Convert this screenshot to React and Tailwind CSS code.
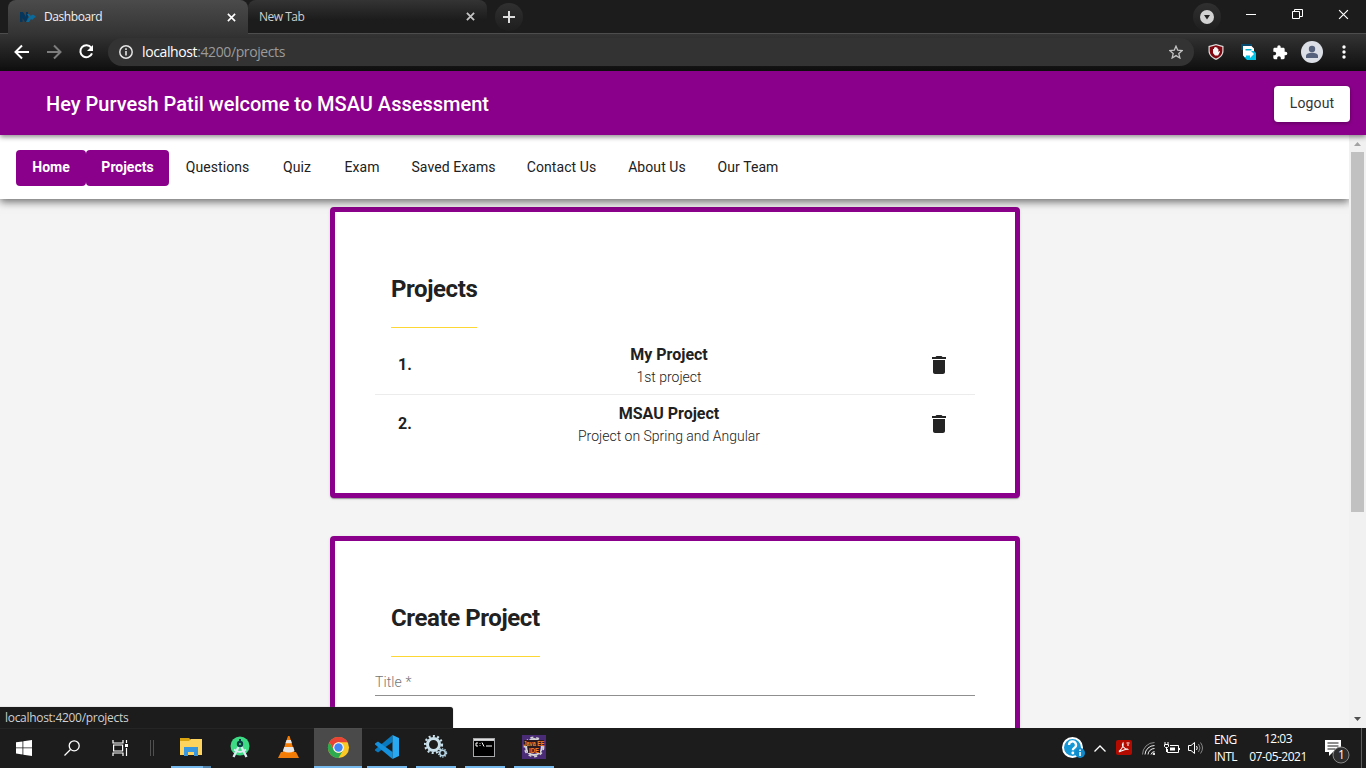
import React from "react";

const UI = "font-['Open_Sans','Noto_Sans',sans-serif]";

function Cross({ size = 9, color = "#fff", w = 1.8 }) {
  return (
    <svg width={size} height={size} viewBox="0 0 10 10" stroke={color} strokeWidth={w} fill="none">
      <path d="M1 1l8 8M9 1l-8 8" />
    </svg>
  );
}

function TabStrip() {
  return (
    <div className="flex h-[33px] shrink-0 bg-[#1c1c1c]">
      <div className="w-2 shrink-0" />
      <div className="flex h-[34px] w-[240px] shrink-0 items-center rounded-t-lg bg-linear-to-b from-[#4b4b4b] to-[#343434] pl-3 pr-3 relative z-10">
        <svg width="16" height="14" viewBox="0 0 16 14" className="shrink-0">
          <path d="M0 12V2h3l3 5V2h2v5l-2 5H5L2.500 8v4z" fill="#06365c" />
          <path d="M6 12l3-5-2-3h2l2 2c1-2 3-1 4 0l1 1-2 1c-1 2-2 2-3 1l-2 3z" fill="#0a6a9c" />
        </svg>
        <span className={`${UI} ml-2 flex-1 text-[12px] leading-4 tracking-[-0.42px] text-[#f1f1f1]`}>Dashboard</span>
        <Cross />
      </div>
      <div className="flex w-[239px] shrink-0 items-center rounded-t-lg bg-linear-to-b from-[#343434] to-[#1c1c1c] to-60% pl-[11px] pr-3">
        <span className={`${UI} flex-1 pt-px text-[12px] leading-4 tracking-[-0.5px] text-[#cfcfcf]`}>New Tab</span>
        <Cross color="#c4c4c4" w={2} />
      </div>
      <div className="ml-2 mt-[3px] flex h-7 w-7 items-center justify-center rounded-full bg-linear-to-b from-[#303030] to-[#1e1e1e]">
        <svg width="12" height="12" viewBox="0 0 12 12" stroke="#ddd" strokeWidth="2"><path d="M6 0v12M0 6h12" /></svg>
      </div>
      <div className="flex-1" />
      <div className="mt-[3px] flex h-7 w-7 items-center justify-center rounded-full bg-linear-to-b from-[#303030] to-[#1e1e1e]">
        <svg width="14" height="14" viewBox="0 0 14 14"><circle cx="7" cy="7" r="7" fill="#d2d2d2" /><path d="M4 5h6L7 9.500z" fill="#222" /></svg>
      </div>
      <div className="flex h-[28px] w-[145px] shrink-0 items-center pl-[25px] pr-[17px] justify-between">
        <svg width="10" height="10"><path d="M0 5.500h10" stroke="#fff" /></svg>
        <svg width="11" height="11" fill="none" stroke="#fff"><path d="M.5 2.500h7v7h-7zM2.500 2.500v-2h8v7h-3" /></svg>
        <Cross size={11} w={1.1} />
      </div>
    </div>
  );
}

function Toolbar() {
  return (
    <div className="flex h-[38px] shrink-0 items-center border-t border-[#4d4d4d] bg-linear-to-b from-[#343434] to-[#0f0f0f] pb-px pl-[14px]">
      <svg width="16" height="16" viewBox="0 0 16 16" fill="none" stroke="#fff" strokeWidth="2"><path d="M15 8H2M8 1.500L1.500 8 8 14.500" /></svg>
      <svg className="ml-4" width="16" height="16" viewBox="0 0 16 16" fill="none" stroke="#7d7d7d" strokeWidth="2"><path d="M1 8h13M8 1.500L14.500 8 8 14.500" /></svg>
      <svg className="ml-4" width="16" height="16" viewBox="0 0 16 16"><path d="M13.200 3.600A6 6 0 1 0 14 9.300" fill="none" stroke="#fff" strokeWidth="2" /><path d="M15 1v6H9z" fill="#fff" /></svg>
      <div className="ml-[14px] flex h-7 w-[1086px] shrink-0 items-center rounded-full bg-[#333333] pl-[11px] pr-[11px]">
        <svg width="14" height="14" viewBox="0 0 14 14"><circle cx="7" cy="7" r="6.200" fill="none" stroke="#e4e4e4" strokeWidth="1.500" /><path d="M6.200 6h1.600v4.500H6.200zM6.200 3.300h1.600v1.600H6.200z" fill="#e4e4e4" /></svg>
        <span className={`${UI} ml-[9px] flex-1 text-[14px] leading-5 tracking-[-0.39px] text-[#9b9b9b]`}>
          <span className="text-white">localhost</span>:4200/projects
        </span>
        <svg width="14" height="14" viewBox="0 0 16 16" fill="none" stroke="#c4c4c4" strokeWidth="1.500"><path d="M8 1.300l2 4.700 5.100.4-3.900 3.400 1.200 5L8 12.100l-4.400 2.700 1.200-5L.9 6.400 6 6z" /></svg>
      </div>
      <svg className="ml-[14px] shrink-0" width="16" height="16" viewBox="0 0 16 16">
        <path d="M8 0l7.500 2v5c0 4-3 7-7.500 9C3.500 14 .5 11 .5 7V2z" fill="#ddd" />
        <path d="M8 1.300l6.300 1.600V7c0 3.400-2.400 5.900-6.300 7.600C4.100 12.900 1.700 10.400 1.700 7V2.900z" fill="#800610" />
        <path d="M5 8V5h1V3.500h1.200V3h1.200v.7h1.200V5h.8v3l1-1 .7.500-2 4H7L5 9z" fill="#f5f5f5" />
      </svg>
      <svg className="ml-[17px] shrink-0" width="15" height="16" viewBox="0 0 15 16">
        <path d="M0 0h11v6H0z" fill="#074a70" />
        <path d="M6 6h6l3 3v7H6l-3-3z" fill="#00c5e8" />
        <path d="M2 2h8.500L13 4.500V7H9v2H5v4H3.500L2 11.500z" fill="#fff" />
        <path d="M5 8.500h4V6l4 4-4 4v-2.500H5z" fill="#fff" />
        <path d="M4.500 5h6v1.500h-6z" fill="#00b2d0" />
      </svg>
      <svg className="ml-4 shrink-0" width="16" height="17" viewBox="0 0 24 24" fill="#fff"><path d="M20.500 11H19V7c0-1.100-.9-2-2-2h-4V3.500a2.500 2.500 0 0 0-5 0V5H4c-1.100 0-1.990.9-1.990 2v3.800H3.500c1.490 0 2.700 1.210 2.700 2.700s-1.210 2.700-2.700 2.700H2V20c0 1.100.9 2 2 2h3.800v-1.500c0-1.490 1.210-2.700 2.700-2.700s2.700 1.210 2.700 2.700V22H17c1.100 0 2-.9 2-2v-4h1.500a2.500 2.500 0 0 0 0-5z" /></svg>
      <svg className="ml-[13px] shrink-0" width="22" height="22" viewBox="0 0 22 22"><circle cx="11" cy="11" r="11" fill="#dcdfe6" /><circle cx="11" cy="8" r="3.200" fill="#56617b" /><path d="M5 17v-2c0-2.200 3-3.300 6-3.300s6 1.100 6 3.300v2z" fill="#56617b" /></svg>
      <svg className="ml-[19px] shrink-0" width="4" height="14" fill="#fff"><circle cx="2" cy="2" r="1.700" /><circle cx="2" cy="7" r="1.700" /><circle cx="2" cy="12" r="1.700" /></svg>
    </div>
  );
}

function NavLink({ children, active, w }) {
  return (
    <div className={`flex h-9 shrink-0 items-center justify-center rounded-[4px] pb-[2px] text-[14px] ${w} ${active ? "bg-[#8b008b] font-bold text-white" : "font-[450] tracking-[0.08px] text-[#212121]"}`}>
      {children}
    </div>
  );
}

function ProjectRow({ index, title, text, last }) {
  return (
    <div className={`flex items-center pl-[23px] pr-6 ${last ? "h-[57px]" : "h-[59px] border-b border-[#ececec]"}`}>
      <div className="w-[60px] text-[16px] font-bold">{index}.</div>
      <div className="flex-1 pt-[2px] text-center">
        <div className="text-[16px] leading-[22px] font-bold">{title}</div>
        <div className="text-[14px] leading-[22px] font-[350]">{text}</div>
      </div>
      <div className="flex w-[71px] justify-end">
        <svg width="24" height="24" viewBox="0 0 24 24" fill="#242424"><path d="M6 19c0 1.100.9 2 2 2h8c1.100 0 2-.9 2-2V7H6v12zM19 4h-3.500l-1-1h-5l-1 1H5v2h14V4z" /></svg>
      </div>
    </div>
  );
}

function Card({ title, className, children }) {
  return (
    <section className={`w-[690px] shrink-0 rounded-[4px] border-[5px] border-[#8b008b] bg-white px-10 shadow-[0_2px_1px_-1px_rgba(0,0,0,.2),0_1px_1px_rgba(0,0,0,.14),0_1px_3px_rgba(0,0,0,.12)] ${className}`}>
      <h2 className="ml-4 mt-[61px] inline-block h-[55px] border-b border-[#fdd835] text-[24px] leading-8 font-bold tracking-[-0.41px]">{title}</h2>
      {children}
    </section>
  );
}

function Scrollbar() {
  return (
    <div className="flex w-[17px] shrink-0 flex-col items-center bg-[#f1f1f1]">
      <svg width="17" height="17"><path d="M5 11h7L8.500 7z" fill="#a3a3a3" /></svg>
      <div className="h-[360px] w-[13px] bg-[#c1c1c1]" />
      <div className="flex-1" />
      <svg width="17" height="17"><path d="M5 6h7L8.500 10z" fill="#505050" /></svg>
    </div>
  );
}

function Task({ children, state }) {
  return (
    <div className={`flex h-10 shrink-0 flex-col items-center ${state === "active" ? "w-12 bg-[#4a4a4a]" : "w-[49px]"}`}>
      <div className="flex h-[38px] items-center">{children}</div>
      {state === "split" && <div className="flex h-0.5 w-10"><div className="h-0.5 w-8 bg-[#76b9ed]" /><div className="h-0.5 flex-1 bg-[#5182a9]" /></div>}
      {state === "open" && <div className="h-0.5 w-10 bg-[#76b9ed]" />}
      {state === "active" && <div className="h-0.5 w-full bg-[#76b9ed]" />}
    </div>
  );
}

function Gear({ cx, cy, r, w, dash, color }) {
  return (
    <g fill="none" stroke={color}>
      <circle cx={cx} cy={cy} r={r} strokeWidth={w} />
      <circle cx={cx} cy={cy} r={r + w * 0.8} strokeWidth={w * 0.8} strokeDasharray={dash} />
    </g>
  );
}

function Taskbar() {
  return (
    <div className="flex h-10 shrink-0 bg-[#1c1c1c]">
      <div className="flex w-12 items-center justify-center">
        <svg width="16" height="16" fill="#fff"><path d="M0 2.300L6.500 1.400V7.500H0zM7.300 1.300L16 0v7.500H7.300zM0 8.300h6.500v6.200L0 13.600zM7.300 8.300H16V16l-8.700-1.300z" /></svg>
      </div>
      <div className="flex w-12 items-center justify-center">
        <svg width="16" height="16" fill="none" stroke="#fff" strokeWidth="1.300"><circle cx="10.200" cy="5.800" r="5" /><path d="M6.500 9.500L.5 15.500" /></svg>
      </div>
      <div className="flex w-12 items-center justify-center">
        <svg width="17" height="16" fill="none" stroke="#fff" strokeWidth="1.200"><path d="M1 0v3h10V0M1 16v-3h10v3M1.600 5h9v6h-9zM14.500 0v3M14.500 8v8" /><path d="M13 4h3v3h-3z" fill="#fff" stroke="none" /></svg>
      </div>
      <div className="flex w-[22px] items-center justify-center gap-[2px] pr-[6px]"><div className="h-4 w-px bg-[#505050]" /><div className="h-4 w-px bg-[#505050]" /></div>
      <Task state="split">
        <svg width="22" height="20" viewBox="0 0 22 20"><path d="M0 1h9l2 2h11v15H0z" fill="#dba512" /><path d="M0 4h9l2-2h11v16H0z" fill="#ffd45e" /><path d="M4 19v-9h14v9h-4v-4H8v4z" fill="#3997df" /></svg>
      </Task>
      <Task>
        <svg width="20" height="22" viewBox="0 0 20 22"><circle cx="10" cy="10" r="9.500" fill="#3ddc84" /><path d="M9 10L3.500 21M11 10l5.500 11" stroke="#dcecf2" strokeWidth="2.300" /><path d="M4 13.500q6 5 12 0" fill="none" stroke="#dcecf2" strokeWidth="1.800" /><circle cx="10" cy="8" r="3.200" fill="#073b45" /><circle cx="10" cy="8" r="1.100" fill="#3ddc84" /><path d="M9 3h2v3H9z" fill="#073b45" /></svg>
      </Task>
      <Task>
        <svg width="21" height="23" viewBox="0 0 21 23"><path d="M3 16h15l3 6H0z" fill="#ef7c0a" /><path d="M10 0h1.500L17 18q-6.500 4-13 0z" fill="#f57c00" /><path d="M8.600 4h4.300l1 3.300H7.400zM6.200 11h9.100l1.200 4q-5.800 3-11.500 0z" fill="#e6e6e6" /></svg>
      </Task>
      <div className="w-px" />
      <Task state="active">
        <svg width="23" height="23" viewBox="0 0 24 24"><circle cx="12" cy="12" r="11" fill="#fbc926" /><path d="M2.470 6.500A11 11 0 0 1 21.530 6.500H12A5.500 5.500 0 0 0 7.240 14.750z" fill="#e94335" /><path d="M2.470 6.500A11 11 0 0 0 12 23l4.760-8.250A5.500 5.500 0 0 1 7.240 14.750z" fill="#2da94f" /><circle cx="12" cy="12" r="5.500" fill="#fff" /><circle cx="12" cy="12" r="4.400" fill="#4285f4" /></svg>
      </Task>
      <Task state="open">
        <svg width="24" height="24" viewBox="0 0 24 24"><path d="M17.500 0v7L3 17.500 0 15.500v-1z" fill="#0879be" /><path d="M17.500 24v-7L3 6.500 0 8.500v1z" fill="#1590dc" /><path d="M17.500 0L24 3v18l-6.500 3z" fill="#29a9f2" /></svg>
      </Task>
      <Task state="open">
        <svg width="24" height="24" viewBox="0 0 24 24"><Gear cx={9.500} cy={9.500} r={6} w={3} dash="2 2.300" color="#c9dfea" /><Gear cx={18.500} cy={18} r={2.800} w={1.600} dash="1.300 1.300" color="#b5d3e3" /></svg>
      </Task>
      <Task state="open">
        <svg className="mr-px" width="22" height="19" viewBox="0 0 22 19"><path d="M0 0h22v19H0z" fill="#a7a9ab" /><path d="M1 3h20v15H1z" fill="#000" /><path d="M1 1h20v1.500H1z" fill="#e0e0e0" /><path d="M5 5H3v3h2M7 5v.8M7 7.200V8M9 4.500l2 4M13 8h6" fill="none" stroke="#fff" /></svg>
      </Task>
      <Task state="open">
        <svg className="overflow-visible" width="24" height="24" viewBox="0 0 24 24"><path d="M0 0h24v24H0z" fill="#4a2b75" /><Gear cx={12} cy={12} r={8} w={2} dash="3 2.900" color="#d4d4d4" /><path d="M2 5h20v6h-4v7H6v-7H2z" fill="#2a1a20" /><text x="1.500" y="11" fontSize="6.500" fontWeight="700" fill="#f28a28" textLength="21" lengthAdjust="spacingAndGlyphs" fontFamily="Liberation Sans">Java EE</text><text x="7" y="17.500" fontSize="7" fontWeight="700" fill="#f28a28" textLength="10" lengthAdjust="spacingAndGlyphs" fontFamily="Liberation Sans">IDE</text></svg>
      </Task>
      <div className="flex-1" />
      <div className="flex shrink-0 items-center">
        <svg width="23" height="23" viewBox="0 0 23 23"><circle cx="10.500" cy="10.500" r="9.500" fill="#1597d5" stroke="#fff" strokeWidth="2" /><path d="M7 8a3.500 3.500 0 1 1 5.200 3c-1 .6-1.400 1-1.400 2.200" fill="none" stroke="#fff" strokeWidth="2.300" /><circle cx="10.800" cy="16" r="1.400" fill="#fff" /><circle cx="18" cy="16" r="5" fill="#118acb" /><path d="M17.300 12.500h1.500V14h-1.500zM17.300 15h1.500v4h-1.500z" fill="#fff" /></svg>
        <svg className="ml-[9px]" width="12" height="7" fill="none" stroke="#fff" strokeWidth="1.300"><path d="M.5 6.500L6 1l5.500 5.500" /></svg>
        <svg className="mb-[2px] ml-[10px]" width="16" height="15" viewBox="0 0 16 15"><rect width="16" height="15" rx="2" fill="#b30b00" /><path d="M3 11.500c2-2 5-4.500 4-8.500-1.500 2 0 6 5.500 6.500M3 11.500c1 1 3-2 9-2.500M10.500 3h3M11 5h2" fill="none" stroke="#fff" strokeWidth="1.100" /></svg>
        <svg className="ml-[10px]" width="13" height="13" viewBox="0 0 13 13" fill="none" stroke="#eee"><path d="M.5 12.500A12 12 0 0 1 12.500.5" stroke="#888" /><path d="M3 12.500A9.500 9.500 0 0 1 12.500 3.500M6 12.500A6.500 6.500 0 0 1 12.500 6.500M9 12.500A4 4 0 0 1 12.500 9.500" /><circle cx="12" cy="12" r="1" fill="#fff" /></svg>
        <svg className="ml-[9px]" width="16" height="13" viewBox="0 0 16 13" fill="none" stroke="#fff"><path d="M6 3.500h8.500v7H3.500V7M15.500 6v2M1 0v2M4 0v2M.5 2.500h4v2l-1 1h-2l-1-1zM2.500 6v4" /><path d="M6 5.500h5v3H6z" fill="#fff" stroke="none" /></svg>
        <svg className="ml-[8px]" width="16" height="14" viewBox="0 0 16 14" fill="none" stroke="#fff"><path d="M.5 4.500h2.500l3.500-3v11l-3.500-3H.5zM8.500 5q1.500 2 0 4" /><path d="M10.500 3q3 4 0 8M12.500 1.500q4 5.500 0 11" stroke="#888" /></svg>
      </div>
      <div className={`${UI} ml-[10px] w-6 shrink-0 pt-[3px] text-[12px] leading-[17px] tracking-[-0.6px] whitespace-nowrap text-white`}><div>ENG</div><div>INTL</div></div>
      <div className={`${UI} ml-[8px] w-[64px] shrink-0 pt-[2px] text-center text-[12px] leading-[18px] tracking-[-0.5px] whitespace-nowrap text-white`}><div>12:03</div><div>07-05-2021</div></div>
      <svg className="mt-[10px] ml-[14px] shrink-0" width="26" height="28" viewBox="0 0 26 28">
        <path d="M1 2h16v12H9l-4 4v-4H1z" fill="#fff" /><path d="M3.500 5h11M3.500 8h11M3.500 11h8" stroke="#1c1c1c" />
        <circle cx="17" cy="17" r="8" fill="#2e2e2e" stroke="#888" /><text x="14" y="21" fontSize="12" fill="#fff" fontFamily="Open Sans">1</text>
      </svg>
      <div className="ml-[11px] h-10 w-[5px] shrink-0 border-l border-[#5d5d5d]" />
    </div>
  );
}

export default function App() {
  return (
    <div className="relative flex h-[768px] w-[1366px] flex-col overflow-hidden bg-[#f4f4f4] font-['Roboto',sans-serif] text-[#212121]">
      <TabStrip />
      <Toolbar />
      <header className="relative z-20 flex h-16 shrink-0 items-center justify-between bg-[#8b008b] pl-[46px] pr-4 shadow-[0_2px_5px_rgba(0,0,0,.45)]">
        <h1 className="pt-[2px] text-[20px] leading-8 font-[550] text-white">Hey Purvesh Patil welcome to MSAU Assessment</h1>
        <button className="mt-[2px] h-9 w-[76px] rounded-[4px] bg-white pb-px text-[14px] font-[450] tracking-[0.15px] text-[#333] shadow-[0_1px_4px_rgba(0,0,0,.35)]">Logout</button>
      </header>
      <div className="flex h-[593px] shrink-0">
        <div className="flex flex-1 flex-col overflow-hidden">
          <nav className="relative z-10 flex h-16 shrink-0 items-center bg-white pl-4 pt-[2px] shadow-[0_3px_8px_rgba(0,0,0,.55)]">
            <NavLink active w="w-[70px]">Home</NavLink>
            <NavLink active w="w-[83px]">Projects</NavLink>
            <NavLink w="w-[97px]">Questions</NavLink>
            <NavLink w="w-[62px]">Quiz</NavLink>
            <NavLink w="w-[68px]">Exam</NavLink>
            <NavLink w="w-[115px]">Saved Exams</NavLink>
            <NavLink w="w-[101px]">Contact Us</NavLink>
            <NavLink w="w-[90px]">About Us</NavLink>
            <NavLink w="w-[92px]">Our Team</NavLink>
          </nav>
          <main className="flex flex-col items-center gap-[38px] pl-px pt-2">
            <Card title="Projects" className="h-[291px]">
              <div className="mt-2">
                <ProjectRow index={1} title="My Project" text="1st project" />
                <ProjectRow index={2} title="MSAU Project" text="Project on Spring and Angular" last />
              </div>
            </Card>
            <Card title="Create Project" className="h-[400px]">
              <div className="mt-[10px] h-[29px] border-b border-[#8f8f8f] pt-[5px] text-[14px] leading-5 font-[350] tracking-[0.1px] text-[#757575]">Title *</div>
            </Card>
          </main>
        </div>
        <Scrollbar />
      </div>
      <Taskbar />
      <div className={`${UI} absolute top-[707px] left-0 z-30 h-[21px] w-[453px] rounded-tr-[3px] bg-[#1c1c1c] pl-[5px] text-[12px] leading-[22px] tracking-[-0.3px] text-[#d0d0d0] shadow-[0_0_1px_#777]`}>localhost:4200/projects</div>
    </div>
  );
}
